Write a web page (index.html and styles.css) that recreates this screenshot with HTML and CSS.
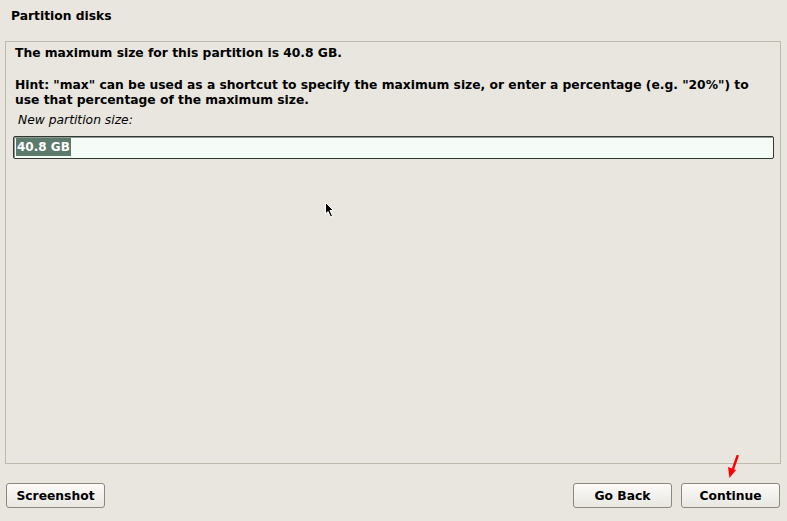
FILE: index.html
```html
<!DOCTYPE html>
<html>
<head>
<meta charset="utf-8">
<link rel="stylesheet" href="styles.css">
</head>
<body>
<div class="screen">
  <header class="title">Partition disks</header>
  <main class="frame">
    <p class="msg">The maximum size for this partition is 40.8 GB.</p>
    <p class="hint">Hint: "max" can be used as a shortcut to specify the maximum size, or enter a percentage (e.g. "20%") to use that percentage of the maximum size.</p>
    <label class="label">New partition size:</label>
    <div class="input"><span class="sel">40.8 GB</span></div>
  </main>
  <footer class="buttons">
    <button class="btn">Screenshot</button>
    <div class="spacer"></div>
    <button class="btn">Go Back</button>
    <button class="btn">Continue</button>
  </footer>
  <svg class="cursor" width="12" height="18" viewBox="0 0 12 18">
    <path d="M0.5 0.5 L0.5 12 L3 9.5 L5.5 15 L7.5 14 L5 8.5 L8.5 8.5 Z" fill="#000" stroke="#fff" stroke-width="1"/>
  </svg>
  <svg class="arrow" width="16" height="26" viewBox="0 0 16 26">
    <path d="M12.5 1 L8 14" stroke="#f00" stroke-width="2.4" stroke-linecap="round"/>
    <path d="M3 12 L11 15 L4.5 23 Z" fill="#f00"/>
  </svg>
</div>
</body>
</html>
```

FILE: styles.css
```css
html, body {
  margin: 0;
  padding: 0;
  background: #e8e6df;
}
.screen {
  position: relative;
  width: 787px;
  height: 521px;
  overflow: hidden;
  font-family: "DejaVu Sans", sans-serif;
  font-size: 12.3px;
  color: #000;
  display: flex;
  flex-direction: column;
}
.title {
  font-weight: bold;
  line-height: 15px;
  padding: 9px 0 0 11px;
  height: 33px;
  box-sizing: border-box;
}
.frame {
  margin: 8px 6px 0 5px;
  height: 423px;
  box-sizing: border-box;
  border: 1px solid #bdb9ad;
  padding: 4px 6px 0 7px;
}
.msg, .hint {
  margin: 0;
  font-weight: bold;
  line-height: 15px;
  padding-left: 2px;
}
.hint {
  margin-top: 17px;
}
.label {
  display: block;
  font-style: italic;
  line-height: 15px;
  margin-top: 5px;
  padding-left: 5px;
}
.input {
  margin-top: 8px;
  height: 23px;
  box-sizing: border-box;
  border: 1px solid #2f3a33;
  border-radius: 2px;
  background: #f5fbf6;
  padding: 1px 0 0 2px;
  box-shadow: inset 1px 1px 0 #8f978f;
}
.sel {
  display: inline-block;
  background: #5b7a6c;
  color: #fff;
  font-weight: bold;
  font-size: 12px;
  line-height: 18px;
  padding: 0 1px;
}
.buttons {
  display: flex;
  align-items: flex-start;
  gap: 9px;
  padding: 19px 7px 0 6px;
}
.spacer { flex: 1; }
.btn {
  width: 99px;
  height: 25px;
  box-sizing: border-box;
  border: 1px solid #8c887c;
  border-radius: 3px;
  background: linear-gradient(#fbfaf8, #e9e7e1);
  font-family: "DejaVu Sans", sans-serif;
  font-weight: bold;
  font-size: 12.3px;
  color: #000;
  padding: 0;
}
.cursor {
  position: absolute;
  left: 325px;
  top: 202px;
}
.arrow {
  position: absolute;
  left: 725px;
  top: 455px;
}
```
